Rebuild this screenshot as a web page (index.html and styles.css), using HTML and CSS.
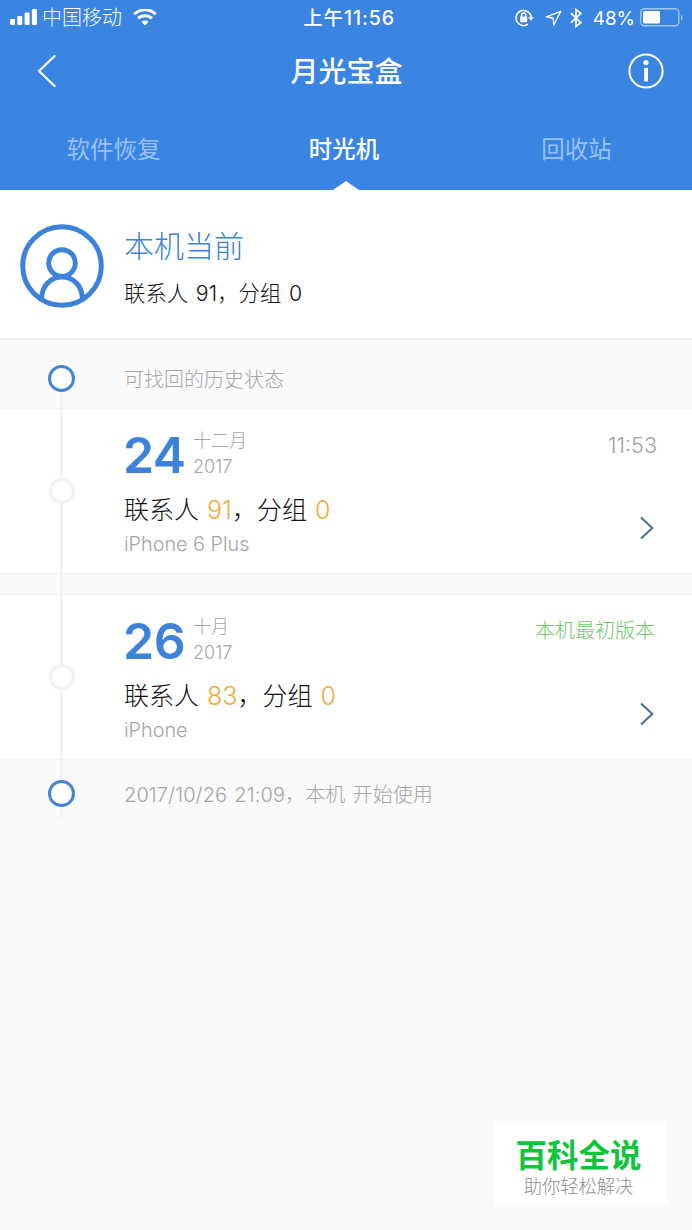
FILE: index.html
```html
<!DOCTYPE html>
<html lang="zh-CN">
<head>
    <meta charset="UTF-8">
    <meta name="viewport" content="width=device-width, initial-scale=1.0">
    <title>月光宝盒</title>
    <link rel="stylesheet" href="styles.css">
</head>
<body>
    <!-- Header -->
    <header>
        <div class="status-bar">
            <div class="status-left">
                <svg class="signal" width="27" height="18" viewBox="0 0 27 18" fill="#fff">
                    <rect x="0" y="10" width="5" height="6" rx="1.2"/>
                    <rect x="7.3" y="7" width="5" height="9" rx="1.2"/>
                    <rect x="14.6" y="3.5" width="5" height="12.5" rx="1.2"/>
                    <rect x="21.9" y="0" width="5" height="16" rx="1.2"/>
                </svg>
                <span class="carrier">中国移动</span>
                <svg class="wifi" width="24" height="18" viewBox="0 0 24 18" fill="none" stroke="#fff" stroke-width="3">
                    <path d="M1.3 5.2C7.3-.8 16.7-.8 22.7 5.2"/>
                    <path d="M5.1 9.4C9 5.7 15 5.7 18.9 9.4"/>
                    <path d="M12 16.4l-3.6-3.7c2-1.7 5.2-1.7 7.2 0z" fill="#fff" stroke="none"/>
                </svg>
            </div>
            <div class="clock">上午11:56</div>
            <div class="status-right">
                <svg class="lock" width="20" height="18" viewBox="0 0 20 18" fill="none" stroke="#fff" stroke-width="1.5">
                    <path d="M16.2 10V9A7.6 7.6 0 1 0 13 15.2"/>
                    <path d="M13 8.2h6l-3 3.4z" fill="#fff" stroke="none"/>
                    <rect x="5.2" y="7.6" width="7" height="5.6" rx=".6" fill="#fff" stroke="none"/>
                    <path d="M6.6 8.2V6.1a2.1 2.1 0 0 1 4.2 0v2.1"/>
                </svg>
                <svg class="location" width="17" height="17" viewBox="0 0 17 17" fill="none" stroke="#fff" stroke-width="1.4" stroke-linejoin="round">
                    <path d="M15.8 1.3L1.4 6.8l6.8 1.4.6 6.8z"/>
                </svg>
                <svg class="bluetooth" width="12" height="20" viewBox="0 0 12 20" fill="none" stroke="#fff" stroke-width="1.7">
                    <path d="M.8 5.2l10 9.4L6 18.4V1.6l4.8 3.8-10 9.4"/>
                </svg>
                <span class="percent">48%</span>
                <svg class="battery" width="44" height="20" viewBox="0 0 44 20" fill="none">
                    <rect x=".8" y=".8" width="38" height="17" rx="3.5" stroke="#9fc5f2" stroke-width="1.4"/>
                    <rect x="3" y="3" width="17" height="12.6" rx="1.5" fill="#fff"/>
                    <path d="M41 6.4c2 .8 2 5 0 6z" fill="#9fc5f2"/>
                </svg>
            </div>
        </div>
        <div class="title-bar">
            <svg class="back" width="20" height="34" viewBox="0 0 20 34" fill="none" stroke="#fff" stroke-width="2.2" stroke-linecap="round" stroke-linejoin="round">
                <path d="M17.6 2L2 17l15.6 15"/>
            </svg>
            <h1>月光宝盒</h1>
            <svg class="info" width="36" height="36" viewBox="0 0 36 36">
                <circle cx="18" cy="18" r="16.6" fill="none" stroke="#fff" stroke-width="2"/>
                <circle cx="18" cy="9.6" r="2.6" fill="#fff"/>
                <rect x="16.1" y="14.8" width="3.9" height="13.6" rx="1" fill="#fff"/>
            </svg>
        </div>
        <nav>
            <a class="tab">软件恢复</a>
            <a class="tab active">时光机</a>
            <a class="tab">回收站</a>
        </nav>
    </header>

    <!-- Current contacts on this phone -->
    <section class="current">
        <svg class="avatar" width="84" height="84" viewBox="0 0 84 84" fill="none" stroke="#3c82d8" stroke-width="5">
            <circle cx="42" cy="42" r="39.3"/>
            <circle cx="42" cy="39" r="13.3"/>
            <path d="M21.5 75C22 61.5 30.5 53 42 53S62 61.5 62.5 75"/>
        </svg>
        <div>
            <h2>本机当前</h2>
            <p>联系人 91，分组 0</p>
        </div>
    </section>

    <!-- Timeline -->
    <section class="timeline">
        <div class="marker first">
            <div class="rail"><span class="dot blue"></span></div>
            <p>可找回的历史状态</p>
        </div>
        <article class="record">
            <div class="rail"><span class="dot"></span></div>
            <div class="details">
                <div class="date">
                    <span class="day">24</span>
                    <span class="month">十二月<br>2017</span>
                </div>
                <p class="contacts">联系人 <em>91</em>，分组 <em>0</em></p>
                <p class="device">iPhone 6 Plus</p>
            </div>
            <div class="side">
                <span class="time">11:53</span>
                <svg class="arrow" width="14" height="24" viewBox="0 0 14 24" fill="none" stroke="#4d6b92" stroke-width="2">
                    <path d="M1 1.5L12.3 12 1 22.5"/>
                </svg>
            </div>
        </article>
        <article class="record">
            <div class="rail"><span class="dot"></span></div>
            <div class="details">
                <div class="date">
                    <span class="day">26</span>
                    <span class="month">十月<br>2017</span>
                </div>
                <p class="contacts">联系人 <em>83</em>，分组 <em>0</em></p>
                <p class="device">iPhone</p>
            </div>
            <div class="side">
                <span class="origin">本机最初版本</span>
                <svg class="arrow" width="14" height="24" viewBox="0 0 14 24" fill="none" stroke="#4d6b92" stroke-width="2">
                    <path d="M1 1.5L12.3 12 1 22.5"/>
                </svg>
            </div>
        </article>
        <div class="marker last">
            <div class="rail"><span class="dot blue"></span></div>
            <p>2017/10/26 21:09，本机 开始使用</p>
        </div>
    </section>

    <!-- Site badge -->
    <div class="badge">
        <strong>百科全说</strong>
        <span>助你轻松解决</span>
    </div>
</body>
</html>
```
FILE: styles.css
```css
* {
    box-sizing: border-box;
}
body {
    font-family: Inter, "Noto Sans CJK SC", sans-serif;
    font-weight: 300;
    margin: 0;
    min-height: 1230px;
    position: relative;
    background-color: #fafafa;
    color: #111;
}
h1, h2, p {
    margin: 0;
    font-weight: inherit;
}
svg {
    display: block;
    flex: none;
}
header {
    height: 190px;
    background-color: #3a84e2;
    color: #fff;
}
.status-bar {
    display: grid;
    grid-template-columns: 1fr auto 1fr;
    height: 36px;
    padding: 0 8px 0 14px;
    align-items: center;
    font-size: 20px;
    line-height: 35px;
    white-space: nowrap;
}
.status-left, .status-right {
    display: flex;
    align-items: center;
}
.status-left {
    margin-left: -4px;
}
.status-right {
    justify-content: flex-end;
}
.carrier {
    margin: 0 11px 0 5px;
}
.clock {
    font-weight: 500;
    font-size: 19.5px;
    letter-spacing: 0.9px;
}
.location {
    margin: 0 8px 0 10px;
}
.percent {
    margin: 0 5px 0 11px;
    font-size: 18.8px;
    font-weight: 400;
}
.title-bar {
    display: flex;
    justify-content: space-between;
    align-items: center;
    height: 70px;
    padding: 0 28px 0 37px;
}
h1 {
    font-size: 28px;
    font-weight: 500;
    padding: 0 0 2px 8px;
}
nav {
    display: grid;
    grid-template-columns: 227px 1fr 231px;
    height: 84px;
}
.tab {
    display: flex;
    flex-direction: column;
    align-items: center;
    height: 84px;
    color: #98c2f5;
    font-size: 23.5px;
    font-weight: 400;
    line-height: 88px;
}
.active {
    color: #fff;
    font-weight: 500;
    position: relative;
}
.active::after {
    content: "";
    position: absolute;
    bottom: 0;
    left: 106px;
    border: 13px solid transparent;
    border-top: 0;
    border-bottom: 9px solid #fff;
}
.current {
    display: flex;
    align-items: flex-start;
    gap: 20px;
    height: 150px;
    padding: 34px 20px 0;
    background-color: #fff;
    border-bottom: 2px solid #f2f2f2;
}
.current h2 {
    color: #3c82d8;
    font-size: 30px;
    line-height: 44px;
}
.current p {
    font-size: 21.3px;
    line-height: 32px;
    margin-top: 9px;
    word-spacing: 1.5px;
    letter-spacing: 0.1px;
}
.timeline {
    position: relative;
}
/* vertical line behind the dots */
.timeline::before {
    content: "";
    position: absolute;
    z-index: 1;
    left: 60px;
    top: 44px;
    bottom: 10px;
    width: 3px;
    background-color: #f2f2f2;
}
.rail {
    display: flex;
    justify-content: center;
    align-items: center;
    width: 124px;
    padding-right: 1px;
    flex: none;
    position: relative;
    z-index: 2;
}
.dot {
    width: 26px;
    height: 26px;
    border: 3px solid #f2f2f2;
    border-radius: 50%;
    background-color: #fff;
}
.dot.blue {
    width: 27px;
    height: 27px;
    border: 3.5px solid #4585d0;
}
.marker {
    display: flex;
    align-items: center;
    height: 68px;
    color: #a5a5a5;
    font-size: 20px;
}
.first {
    padding-top: 9px;
}
.last {
    padding-bottom: 1px;
}
.last p {
    letter-spacing: 0.1px;
    word-spacing: 1.5px;
    padding-bottom: 1px;
}
.record {
    display: flex;
    height: 166px;
    background-color: #fff;
    border-top: 1px solid #f2f2f2;
    border-bottom: 1px solid #f2f2f2;
}
.record + .record {
    margin-top: 20px;
}
.details {
    flex: 1;
    padding-top: 18px;
}
.date {
    display: flex;
    gap: 9px;
    height: 54px;
}
.day {
    width: 60px;
    color: #3c82d8;
    font-size: 50px;
    font-weight: 600;
    line-height: 56px;
    letter-spacing: -0.5px;
    text-indent: -1px;
}
.month {
    color: #a5a5a5;
    font-size: 18px;
    line-height: 26px;
    padding-top: 1px;
}
.contacts {
    font-size: 25px;
    line-height: 36px;
    margin-top: 11px;
    word-spacing: 1px;
}
.contacts em {
    color: #ecae3e;
    font-style: normal;
}
.device {
    color: #a5a5a5;
    font-size: 19.8px;
    line-height: 30px;
    margin-top: 1px;
}
.side {
    display: flex;
    flex-direction: column;
    align-items: flex-end;
    padding: 21px 35px 0 0;
    line-height: 30px;
}
.time {
    color: #a0a0a0;
    font-size: 21.6px;
}
.origin {
    color: #70c868;
    font-size: 20px;
    margin-right: 2px;
}
.arrow {
    margin: 56px 3px 0 0;
}
.badge {
    position: absolute;
    left: 494px;
    top: 1121px;
    width: 173px;
    height: 84px;
    padding: 15px 4px 0 0;
    background-color: #fff;
    text-align: center;
}
.badge strong, .badge span {
    display: block;
}
.badge strong {
    color: #0dc53b;
    font-size: 31.5px;
    font-weight: 700;
    line-height: 40px;
}
.badge span {
    color: #8c8c8c;
    font-size: 18.3px;
    line-height: 21px;
}
```
